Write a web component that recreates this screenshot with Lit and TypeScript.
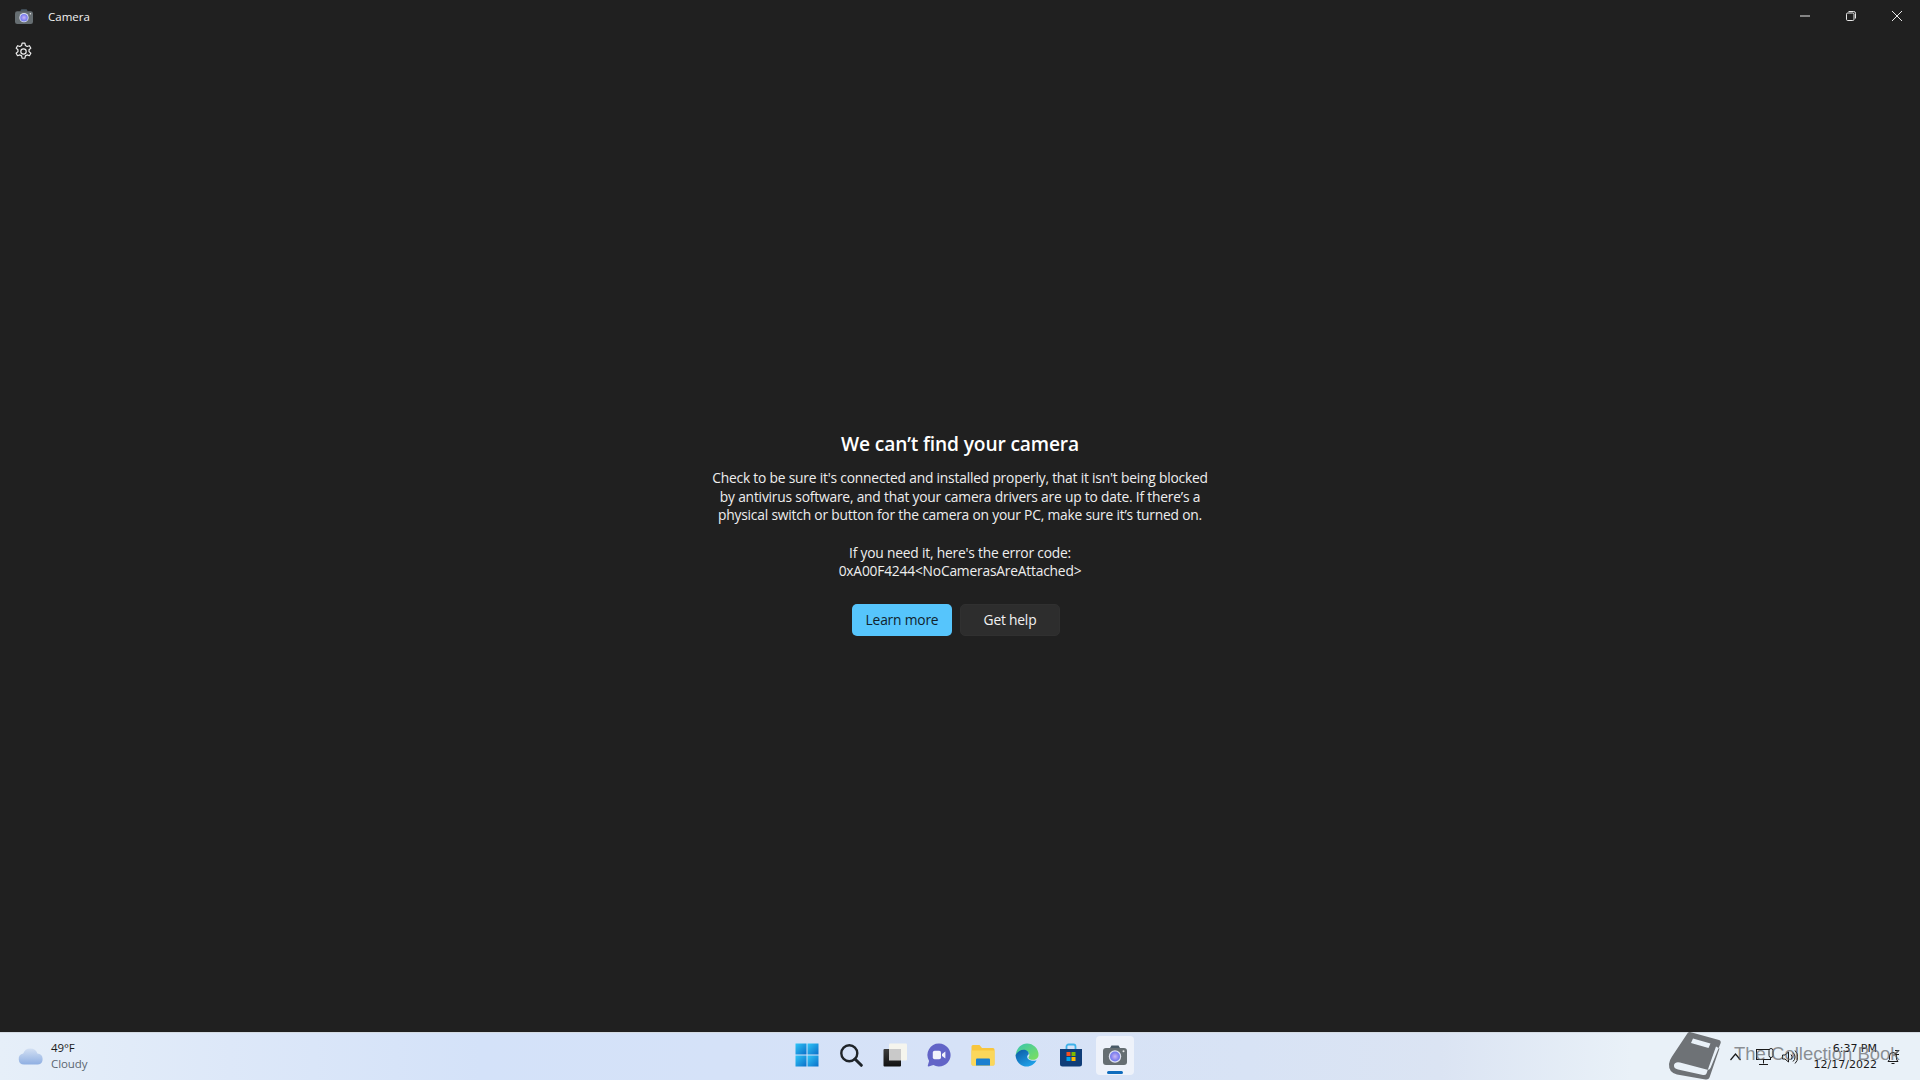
import { LitElement, html, css } from "lit";
import { customElement } from "lit/decorators.js";

const cameraIcon = (w: number, h: number) => html`<svg width=${w} height=${h} viewBox="0 0 24 20">
  <defs>
    <radialGradient id="lens" cx="50%" cy="50%" r="50%">
      <stop offset="0" stop-color="#c9b8f5" />
      <stop offset="0.7" stop-color="#8a86ee" />
      <stop offset="1" stop-color="#6d7af0" />
    </radialGradient>
  </defs>
  <path d="M7 3 8.500 .4h7L17 3z" fill="#4a5a66" />
  <rect x="0" y="3" width="24" height="17" rx="3" fill="#666e72" />
  <circle cx="12" cy="11.500" r="6.200" fill="#dfe2f0" />
  <circle cx="12" cy="11.500" r="5" fill="url(#lens)" />
  <circle cx="20.500" cy="6.300" r="1" fill="#e8e8e8" />
</svg>`;

@customElement("app-root")
class AppRoot extends LitElement {
  static override styles = css`
    :host {
      display: flex;
      flex-direction: column;
      width: 1920px;
      height: 1080px;
      overflow: hidden;
      position: relative;
      background: #202020;
      color: #fff;
      font-family: "Open Sans", "Noto Sans", sans-serif;
    }

    .titlebar {
      display: flex;
      align-items: center;
      height: 32px;
      flex: none;
    }

    .app-icon {
      display: flex;
      margin-left: 15px;
      width: 18px;
    }

    .app-title {
      margin-left: 15px;
      font-size: 11.5px;
      color: #f2f2f2;
    }

    .win-buttons {
      display: flex;
      margin-left: auto;
    }

    .win-buttons div {
      width: 46px;
      height: 32px;
      display: flex;
      align-items: center;
      justify-content: center;
    }

    .settings {
      display: flex;
      flex: none;
      padding: 10px 0 0 14px;
      height: 19px;
    }

    main {
      flex: 1;
      display: flex;
      flex-direction: column;
      align-items: center;
      padding-top: 369px;
    }

    h1 {
      margin: 0;
      font-size: 19.2px;
      line-height: 28px;
      font-weight: 600;
      letter-spacing: -0.15px;
    }

    p {
      margin: 0;
      width: 540px;
      text-align: center;
      font-size: 13.8px;
      line-height: 18.6px;
      color: #eee;
      letter-spacing: -0.2px;
    }

    .desc {
      margin-top: 11px;
    }

    .code {
      margin-top: 19px;
    }

    .actions {
      display: flex;
      gap: 8px;
      margin-top: 23px;
      transform: translateX(-4px);
    }

    .btn {
      height: 32px;
      width: 100px;
      display: flex;
      align-items: center;
      justify-content: center;
      border-radius: 5px;
      font-size: 13.8px;
      letter-spacing: -0.2px;
      box-sizing: border-box;
    }

    .primary {
      background: #56c5fc;
      color: #10222c;
    }

    .secondary {
      background: #2d2d2d;
      border: 1px solid #303030;
      color: #f2f2f2;
    }

    .taskbar {
      flex: none;
      height: 48px;
      display: grid;
      grid-template-columns: 1fr auto 1fr;
      align-items: center;
      border-top: 1px solid #d4dbe3;
      box-sizing: border-box;
      background: linear-gradient(
        90deg,
        #e6eff9 0%,
        #dde8f9 12%,
        #d4e2f9 25%,
        #d6e2f7 50%,
        #d8e3f5 65%,
        #dbe4f3 75%,
        #e9f1f8 85%,
        #e9f1f8 100%
      );
    }

    .weather {
      display: flex;
      align-items: center;
      padding-left: 18px;
      gap: 7px;
      margin-top: -2px;
    }

    .weather-text {
      font-size: 11.5px;
      line-height: 16px;
      color: #1a1a1a;
      letter-spacing: -0.1px;
    }

    .weather-text span {
      display: block;
      color: #5c6670;
    }

    .apps {
      display: flex;
      align-items: center;
      transform: translate(1px, -2px);
    }

    .app {
      width: 44px;
      height: 40px;
      display: flex;
      align-items: center;
      justify-content: center;
      position: relative;
    }

    .app.active::before {
      content: "";
      position: absolute;
      inset: 1px 3px 0 3px;
      background: #eef2fa;
      border-radius: 4px;
    }

    .app.active::after {
      content: "";
      position: absolute;
      left: 14px;
      right: 14px;
      bottom: 1px;
      height: 3px;
      border-radius: 2px;
      background: #0f6cbd;
    }

    .app svg {
      position: relative;
    }

    .tray {
      display: flex;
      align-items: center;
      justify-content: flex-end;
      color: #1a1a1a;
      font-family: "DejaVu Sans", sans-serif;
    }

    .tray-icons {
      display: flex;
      align-items: center;
      gap: 6px;
      margin-right: 16px;
    }

    .caret {
      margin-right: 9px;
    }

    .clock {
      text-align: right;
      font-size: 11px;
      line-height: 16px;
    }

    .bell {
      display: flex;
      margin: 0 19px 0 8px;
    }

    .watermark {
      position: absolute;
      left: 1660px;
      top: 1028px;
      display: flex;
      align-items: center;
      height: 52px;
      gap: 4px;
      color: rgba(96, 98, 102, 0.7);
      font-family: "Liberation Sans", sans-serif;
      font-size: 18.5px;
      white-space: nowrap;
      pointer-events: none;
    }
  `;

  private renderApps() {
    return html`
      <div class="app">
        <svg width="24" height="24" viewBox="0 0 24 24">
          <defs>
            <linearGradient id="win" x1="0" y1="0" x2="1" y2="1">
              <stop offset="0" stop-color="#30c5f7" />
              <stop offset="1" stop-color="#0a6fc9" />
            </linearGradient>
          </defs>
          <rect x="0.500" y="0.500" width="11" height="11" fill="url(#win)" />
          <rect x="12.500" y="0.500" width="11" height="11" fill="url(#win)" />
          <rect x="0.500" y="12.500" width="11" height="11" fill="url(#win)" />
          <rect x="12.500" y="12.500" width="11" height="11" fill="url(#win)" />
        </svg>
      </div>
      <div class="app">
        <svg width="24" height="24" viewBox="0 0 24 24" fill="none" stroke="#1f2429">
          <circle cx="10.300" cy="10.300" r="8" stroke-width="2.400" />
          <path d="M16 16l6.300 6.300" stroke-width="3" stroke-linecap="round" />
        </svg>
      </div>
      <div class="app">
        <svg width="24" height="24" viewBox="0 0 24 24">
          <defs>
            <linearGradient id="tvfront" x1="0" y1="0" x2="0" y2="1">
              <stop offset="0" stop-color="#3c3c3c" />
              <stop offset="1" stop-color="#111" />
            </linearGradient>
          </defs>
          <rect x="6" y="0.500" width="18" height="17" rx="1" fill="#f5f5ee" />
          <rect x="0.500" y="6" width="17.500" height="17.500" rx="1" fill="url(#tvfront)" />
          <rect x="6" y="6" width="12" height="11.500" fill="#c9c9c9" />
        </svg>
      </div>
      <div class="app">
        <svg width="24" height="24" viewBox="0 0 24 24">
          <path d="M12 0.500a11.500 11.500 0 1 1-5.600 21.500L1.600 23.400c-.5.100-1-.3-.8-.9l1.300-4.600A11.500 11.500 0 0 1 12 .5z" fill="#6264c7" />
          <rect x="5.800" y="7.800" width="8.200" height="8.400" rx="1.800" fill="#f2f2fb" />
          <path d="M15 11l3.400-2.400v6.800L15 13z" fill="#f2f2fb" />
        </svg>
      </div>
      <div class="app">
        <svg width="24" height="24" viewBox="0 0 24 24">
          <path d="M0.500 3.500a1.500 1.500 0 0 1 1.500-1.500h6.500l2.500 3H22a1.500 1.500 0 0 1 1.500 1.500V21a1.500 1.500 0 0 1-1.500 1.500H2A1.500 1.500 0 0 1 .5 21z" fill="#f8c63d" />
          <path d="M0.500 7.500h23V21a1.500 1.500 0 0 1-1.500 1.500H2A1.500 1.500 0 0 1 .5 21z" fill="#fbd75b" />
          <path d="M6 15.500h12a1 1 0 0 1 1 1v6H5v-6a1 1 0 0 1 1-1z" fill="#1a7fd0" />
        </svg>
      </div>
      <div class="app">
        <svg width="24" height="24" viewBox="0 0 24 24">
          <defs>
            <linearGradient id="edge1" x1="0" y1="0" x2="1" y2="1">
              <stop offset="0" stop-color="#37c6b0" />
              <stop offset="1" stop-color="#7fe05b" />
            </linearGradient>
            <linearGradient id="edge2" x1="0" y1="0" x2="0.700" y2="1">
              <stop offset="0" stop-color="#0c59a4" />
              <stop offset="1" stop-color="#1fa3ea" />
            </linearGradient>
          </defs>
          <path d="M12 0.500a11.500 11.500 0 0 1 11.500 11.500c0 3-2.500 4.800-5.500 4.800-2.400 0-4.600-.8-4.600-2.400 0-.8 1-1 1-2.400 0-2.400-2.600-4.200-5.400-4.200-3.400 0-6.800 2.400-8.300 5C1 6 5.800.5 12 .5z" fill="url(#edge1)" />
          <path d="M.6 12c1.500-3 4.900-5.200 8-5.200 2.800 0 5.200 1.800 5.200 4 0 1-1.600 1.200-1.600 3 0 3.200 5.200 5 9.400 3.400-1.800 3.600-5.600 6.300-9.800 6.300C5.800 23.500.4 18.200.6 12z" fill="url(#edge2)" />
        </svg>
      </div>
      <div class="app">
        <svg width="24" height="24" viewBox="0 0 24 24">
          <path d="M7.500 6V3.500A2 2 0 0 1 9.500 1.500h5a2 2 0 0 1 2 2V6" fill="none" stroke="#3fb2ea" stroke-width="1.800" />
          <path d="M1 6h22v15a2.500 2.500 0 0 1-2.500 2.500h-17A2.500 2.500 0 0 1 1 21z" fill="#0f3d78" />
          <rect x="7.500" y="9" width="4" height="4" fill="#f25022" />
          <rect x="12.500" y="9" width="4" height="4" fill="#7fba00" />
          <rect x="7.500" y="14" width="4" height="4" fill="#00a4ef" />
          <rect x="12.500" y="14" width="4" height="4" fill="#ffb900" />
        </svg>
      </div>
      <div class="app active">${cameraIcon(24, 20)}</div>
    `;
  }

  override render() {
    return html`
      <div class="titlebar">
        <div class="app-icon">${cameraIcon(18, 15)}</div>
        <div class="app-title">Camera</div>
        <div class="win-buttons">
          <div>
            <svg width="10" height="10" viewBox="0 0 10 10" stroke="#e8e8e8" fill="none"><path d="M0 5h10" /></svg>
          </div>
          <div>
            <svg width="10" height="10" viewBox="0 0 10 10" stroke="#e8e8e8" fill="none">
              <rect x="0.500" y="2" width="7.500" height="7.500" rx="1.200" />
              <path d="M2.500 .5h5.200a1.800 1.800 0 0 1 1.800 1.800V7.500" />
            </svg>
          </div>
          <div>
            <svg width="10" height="10" viewBox="0 0 10 10" stroke="#e8e8e8" fill="none"><path d="M0 0l10 10M10 0L0 10" /></svg>
          </div>
        </div>
      </div>
      <div class="settings">
        <svg width="19" height="19" viewBox="0 0 24 24" fill="none" stroke="#eee" stroke-width="1.500" stroke-linejoin="round">
          <circle cx="12" cy="12" r="3.400" />
          <path d="M10.200 1.500h3.600l.6 3 2.200 1.200 2.900-1 1.800 3.100-2.300 2v2.400l2.300 2-1.800 3.100-2.900-1-2.200 1.200-.6 3h-3.600l-.6-3-2.200-1.200-2.900 1-1.800-3.100 2.300-2v-2.400l-2.300-2 1.800-3.100 2.900 1 2.200-1.200z" />
        </svg>
      </div>
      <main>
        <h1>We can’t find your camera</h1>
        <p class="desc">
          Check to be sure it's connected and installed properly, that it isn't being blocked<br />
          by antivirus software, and that your camera drivers are up to date. If there’s a<br />
          physical switch or button for the camera on your PC, make sure it’s turned on.
        </p>
        <p class="code">If you need it, here's the error code:<br />0xA00F4244&lt;NoCamerasAreAttached&gt;</p>
        <div class="actions">
          <div class="btn primary">Learn more</div>
          <div class="btn secondary">Get help</div>
        </div>
      </main>
      <div class="taskbar">
        <div class="weather">
          <svg width="26" height="18" viewBox="0 0 26 18">
            <defs>
              <linearGradient id="cloud" x1="0" y1="0" x2="0" y2="1">
                <stop offset="0" stop-color="#d3e0f3" />
                <stop offset="1" stop-color="#8fafe2" />
              </linearGradient>
            </defs>
            <path d="M6 17.500a5.500 5.500 0 0 1-.8-10.900A7.500 7.500 0 0 1 19.400 6.400a5.600 5.600 0 0 1 .6 11.100z" fill="url(#cloud)" />
          </svg>
          <div class="weather-text">49°F<span>Cloudy</span></div>
        </div>
        <div class="apps">${this.renderApps()}</div>
        <div class="tray">
          <div class="tray-icons">
            <svg class="caret" width="11" height="8" viewBox="0 0 11 8" fill="none" stroke="#1a1a1a" stroke-width="1.200"><path d="M.5 7l5-6 5 6" /></svg>
            <svg width="20" height="18" viewBox="0 0 20 18" fill="none" stroke="#1a1a1a">
              <rect x="0.500" y="1.500" width="14" height="10" />
              <path d="M7.500 11.500v4M3 16.500h9" />
              <rect x="13" y="0.500" width="4" height="9" rx="2" fill="#e9f1f8" />
            </svg>
            <svg width="16" height="16" viewBox="0 0 16 16" fill="none" stroke="#1a1a1a">
              <path d="M.5 6h2.500l3.500-3v10l-3.500-3H.5z" />
              <path d="M9 5.500a3.500 3.500 0 0 1 0 5M11 3.500a6 6 0 0 1 0 9M13 1.500a9 9 0 0 1 0 13" />
            </svg>
          </div>
          <div class="clock">6:37 PM<br />12/17/2022</div>
          <div class="bell">
            <svg width="16" height="16" viewBox="0 0 16 16" fill="none" stroke="#1a1a1a">
              <path d="M3 12.500h10l-1.500-2V7a3.500 3.500 0 0 0-7 0v3.500zM6.500 14.500h3" />
              <path d="M10 1.500h4l-4 4h4" />
            </svg>
          </div>
        </div>
      </div>
      <div class="watermark">
        <svg width="70" height="52" viewBox="0 0 70 52">
          <path
            d="M30 4 59 12Q61.500 13 60.500 15.500L50.500 40Q49.500 42.500 46.500 41.500L20 34.500Q15 33.500 14 37Q13.500 40.500 18 41.500L43 47Q45.500 47.500 46.500 45.500L56 18.500 59.500 20.500 49.500 49.500Q48.500 52 45.500 51.500L17 46.500Q8.500 44.500 9 36Q9.500 32 12 28.500L27 6Q28 3.500 30 4zM33 10.500 31 15 48.500 20 50.500 15.500z"
            fill="#6e7276"
            fill-rule="evenodd"
          />
        </svg>
        The Collection Book
      </div>
    `;
  }
}

// Prevent tree-shaking
void AppRoot;
